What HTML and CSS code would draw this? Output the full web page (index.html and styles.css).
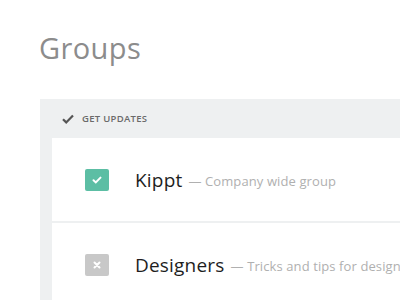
FILE: index.html
```html
<!DOCTYPE html>
<html lang="en">
<head>
  <meta charset="UTF-8" />
  <title>Groups</title>
  <link rel="stylesheet" href="styles.css">
</head>
<body>
  <h1 class="title">Groups</h1>

  <div class="panel">
    <div class="panel-head">
      <svg class="head-check" viewBox="0 0 12 10" aria-hidden="true">
        <path d="M1 5.2l3.2 3.2L11 1.4" />
      </svg>
      <span>GET UPDATES</span>
    </div>

    <ul class="groups">
      <li class="group">
        <span class="box on">
          <svg viewBox="0 0 10 8" aria-hidden="true"><path d="M1.5 4.2l2.3 2.2L8.5 1.6" /></svg>
        </span>
        <span class="name">Kippt</span>
        <span class="desc">— Company wide group</span>
      </li>
      <li class="group">
        <span class="box off">
          <svg viewBox="0 0 10 10" aria-hidden="true"><path d="M2.5 2.5l5 5M7.5 2.5l-5 5" /></svg>
        </span>
        <span class="name">Designers</span>
        <span class="desc">— Tricks and tips for designers</span>
      </li>
    </ul>
  </div>
</body>
</html>
```

FILE: styles.css
```css
* {
  box-sizing: border-box;
}

html, body {
  margin: 0;
  height: 100%;
  background: #fff;
  font-family: 'Open Sans', 'Lato', sans-serif;
  overflow: hidden;
}

body {
  padding: 29px 0 0 40px;
  width: 460px;
}

.title {
  margin: 0 0 32px -1px;
  font-size: 29px;
  font-weight: 400;
  letter-spacing: 0.4px;
  line-height: 38px;
  color: #8c8c8c;
}

.panel {
  background: #eef0f1;
  padding-left: 12px;
  height: 300px;
}

.panel-head {
  display: flex;
  align-items: center;
  height: 39px;
  padding-left: 10px;
  font-size: 9.5px;
  font-weight: 600;
  letter-spacing: 0.3px;
  color: #6a6a6a;
}

.head-check {
  width: 12px;
  height: 10px;
  margin-right: 8px;
  fill: none;
  stroke: #555;
  stroke-width: 2.2;
}

.groups {
  list-style: none;
  margin: 0;
  padding: 0;
  background: #fff;
}

.group {
  display: flex;
  align-items: center;
  height: 85px;
  padding-left: 33px;
  border-bottom: 2px solid #eef0f1;
  white-space: nowrap;
}

.box {
  display: flex;
  align-items: center;
  justify-content: center;
  width: 24px;
  height: 22px;
  margin-right: 26px;
  border-radius: 2px;
  flex-shrink: 0;
}

.box svg {
  width: 10px;
  height: 10px;
  fill: none;
  stroke: #fff;
  stroke-width: 2;
  stroke-linecap: round;
}

.box.on {
  background: #5cbea4;
}

.box.off {
  background: #c8c8c8;
}

.name {
  font-size: 19px;
  letter-spacing: 0.2px;
  color: #1e1e1e;
  margin-right: 6px;
}

.desc {
  font-size: 13px;
  letter-spacing: 0.1px;
  color: #b0b0b0;
  padding-top: 3px;
}
```
